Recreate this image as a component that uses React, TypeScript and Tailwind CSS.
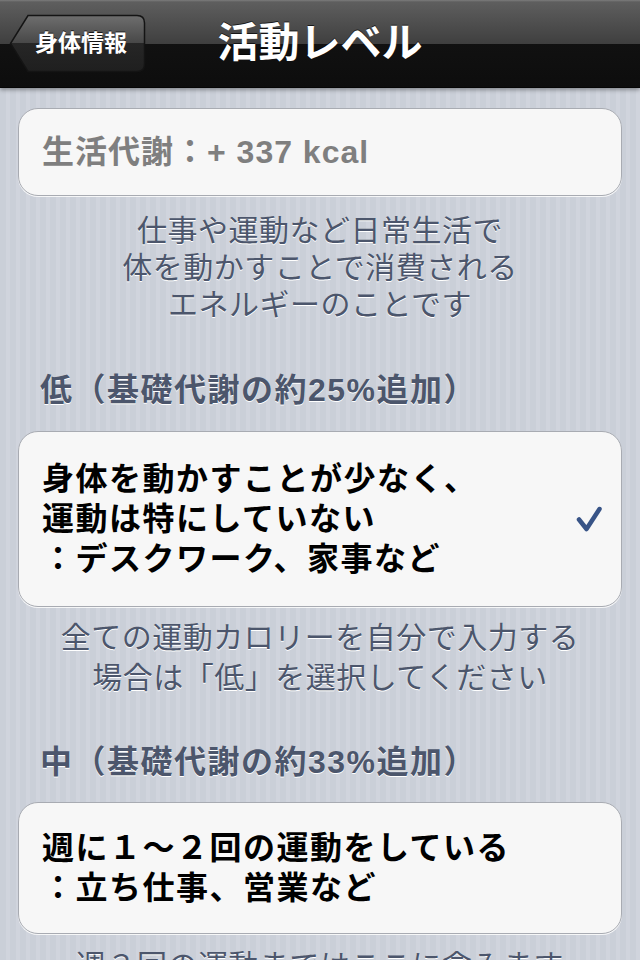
const jp = "font-['Liberation_Sans','Noto_Sans_CJK_JP',sans-serif]";

const BackButton = () => (
  <div className="relative h-[59px] w-[137px]">
    <svg className="absolute inset-0" width="137" height="59" viewBox="0 0 137 59">
      <defs>
        <linearGradient id="backFill" x1="0" y1="0" x2="0" y2="1">
          <stop offset="0" stopColor="#6e6e6e" />
          <stop offset="0.5" stopColor="#474747" />
          <stop offset="0.5" stopColor="#262626" />
          <stop offset="1" stopColor="#1f1f1f" />
        </linearGradient>
      </defs>
      <path
        d="M19 1.5 H128 Q135.5 1.5 135.5 9 V50 Q135.5 57.5 128 57.5 H19 L1.5 29.5 Z"
        fill="url(#backFill)"
        stroke="#141414"
        strokeWidth="1.5"
      />
    </svg>
    <div className="relative flex h-full items-center pl-[26px]">
      <span className="text-[23px] font-bold text-white [text-shadow:0_-1px_0_rgba(0,0,0,0.7)]">
        身体情報
      </span>
    </div>
  </div>
);

const Check = () => (
  <svg width="28" height="28" viewBox="0 0 28 28">
    <path
      d="M4 14.5 L11.5 24 L24.5 4"
      fill="none"
      stroke="#385487"
      strokeWidth="4.5"
      strokeLinecap="round"
      strokeLinejoin="round"
    />
  </svg>
);

const SectionTitle = ({ children }: { children: React.ReactNode }) => (
  <div className="px-[40px] text-[32px] font-bold leading-[40px] tracking-[1.5px] text-[#4c566c] [text-shadow:0_1px_0_#ffffff]">
    {children}
  </div>
);

const Note = ({ lines, leading }: { lines: string[]; leading: string }) => (
  <div
    className={`text-center text-[30px] tracking-[0.5px] text-[#4c566c] [text-shadow:0_1px_0_#ffffff] ${leading}`}
  >
    {lines.map((l) => (
      <div key={l}>{l}</div>
    ))}
  </div>
);

const cell =
  "mx-[18px] rounded-[20px] border border-[#a8abb2] bg-[#f7f7f7] shadow-[0_1px_0_rgba(255,255,255,0.8)]";
const body = "text-[32px] font-bold leading-[40px] tracking-[1.5px] text-black";

export default function App() {
  return (
    <div
      className={`${jp} flex h-[960px] w-[640px] flex-col overflow-hidden bg-[#ccd1da] bg-[image:repeating-linear-gradient(90deg,#cacfd8_0px,#cacfd8_6px,#d0d4dd_6px,#d0d4dd_10px)]`}
    >
      {/* nav bar */}
      <header className="relative z-10 grid h-[88px] shrink-0 grid-cols-[1fr_auto_1fr] items-center border-b border-[#050505] bg-[linear-gradient(to_bottom,#7c7c7c_0px,#5e5e5e_2px,#3f3f3f_44px,#111111_44px,#0d0d0d_88px)] shadow-[0_2px_4px_rgba(0,0,0,0.35)]">
        <div className="pl-[9px]">
          <BackButton />
        </div>
        <h1 className="text-[41px] font-bold leading-none text-white [text-shadow:0_-1px_0_rgba(0,0,0,0.7)]">
          活動レベル
        </h1>
        <div />
      </header>

      <main className="flex flex-col">
        <div className={`${cell} mt-[20px] py-[23px] pl-[23px]`}>
          <div className="text-[32px] font-bold leading-[40px] tracking-[1px] text-[#7f7f7f]">
            生活代謝：+ 337 kcal
          </div>
        </div>

        <div className="mt-[16px]">
          <Note
            leading="leading-[37px]"
            lines={["仕事や運動など日常生活で", "体を動かすことで消費される", "エネルギーのことです"]}
          />
        </div>

        <div className="mt-[47px]">
          <SectionTitle>低（基礎代謝の約25%追加）</SectionTitle>
        </div>

        <div className={`${cell} mt-[21px] flex items-center justify-between py-[27px] pl-[23px] pr-[18px]`}>
          <div className={body}>
            <div>身体を動かすことが少なく、</div>
            <div>運動は特にしていない</div>
            <div>：デスクワーク、家事など</div>
          </div>
          <Check />
        </div>

        <div className="mt-[11px]">
          <Note
            leading="leading-[40px]"
            lines={["全ての運動カロリーを自分で入力する", "場合は「低」を選択してください"]}
          />
        </div>

        <div className="mt-[44px]">
          <SectionTitle>中（基礎代謝の約33%追加）</SectionTitle>
        </div>

        <div className={`${cell} mt-[20px] py-[25px] pl-[23px]`}>
          <div className={body}>
            <div>週に１～２回の運動をしている</div>
            <div>：立ち仕事、営業など</div>
          </div>
        </div>

        <div className="mt-[12px]">
          <Note leading="leading-[40px]" lines={["週３回の運動まではここに含みます"]} />
        </div>
      </main>
    </div>
  );
}
